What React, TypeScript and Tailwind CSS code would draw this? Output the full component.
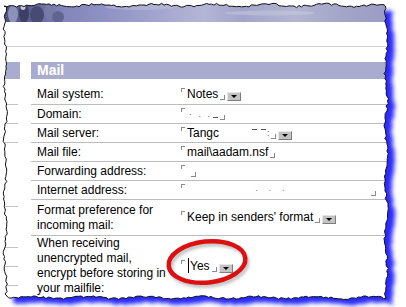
import React from "react";

// deterministic jitter for the torn paper edge
function makeRng(seed: number) {
  let s = seed;
  return () => {
    s = (s * 9301 + 49297) % 233280;
    return s / 233280;
  };
}

const rnd = makeRng(11);
const jag = (i: number) => 1.2 + 1.2 * Math.sin(i / 9) + rnd() * 2.2;
const pts: [number, number][] = [];
for (let x = 4; x < 386; x += 2.5) pts.push([x, 3 + jag(x)]);
for (let y = 6; y < 294; y += 2.5) pts.push([388.5 - jag(y), y]);
for (let x = 386; x > 6; x -= 2.5) pts.push([x, 299.5 - jag(x + 40) * 0.85]);
for (let y = 294; y > 6; y -= 2.5) pts.push([3 + jag(y + 70), y]);

const svgPoints = pts.map(([x, y]) => `${x.toFixed(1)},${y.toFixed(1)}`).join(" ");
const clip = `polygon(${pts.map(([x, y]) => `${x.toFixed(1)}px ${y.toFixed(1)}px`).join(", ")})`;

const Open = () => (
  <span className="self-start mt-[1px] w-[4px] h-[4px] border-t border-l border-[#8a8a8a] shrink-0" />
);

const Close = ({ className = "" }: { className?: string }) => (
  <span className={`self-end mb-[2px] w-[5px] h-[5px] border-b border-r border-[#8a8a8a] shrink-0 ${className}`} />
);

const Drop = () => (
  <span className="self-end mb-[1px] ml-[2px] w-[14px] h-[9px] bg-[#c3c3c3] border-t border-l border-[#e6e6e6] border-b border-r border-b-[#7d7d7d] border-r-[#7d7d7d] flex items-center justify-center shrink-0">
    <span className="w-0 h-0 border-l-[3px] border-r-[3px] border-t-[3px] border-l-transparent border-r-transparent border-t-black" />
  </span>
);

const Row = ({ h, label, children }: { h: string; label: React.ReactNode; children: React.ReactNode }) => (
  <div className={`flex items-center border-b border-[#bcbcbc] ${h}`}>
    <div className="w-[145px] pl-[6px] leading-[15px] shrink-0">{label}</div>
    <div className="flex items-stretch h-[15px] pl-[5px]">{children}</div>
  </div>
);

export default function App() {
  return (
    <div className="relative w-[406px] h-[307px] bg-white overflow-hidden font-['Liberation_Sans',Arial,sans-serif] text-[12px] text-black">
      <svg className="absolute inset-0" width="406" height="307">
        <defs>
          <filter id="sh" x="-10%" y="-10%" width="120%" height="120%">
            <feGaussianBlur stdDeviation="2.2" />
          </filter>
        </defs>
        <polygon points={svgPoints} transform="translate(7 6)" fill="#2a2aff" filter="url(#sh)" />
      </svg>

      <div className="relative w-[406px] h-[307px] bg-white" style={{ clipPath: clip }}>
        {/* banner */}
        <div className="relative h-[22px] w-[392px] bg-[linear-gradient(90deg,#4d5078_0%,#5f6290_8%,#8185ba_16%,#9093c4_28%,#a3a5cf_40%,#b4b6d6_52%,#a2a4ca_62%,#b3b5d3_75%,#a0a2c6_90%,#9a9cc4_100%)]">
          <svg className="absolute inset-0" width="392" height="22">
            <ellipse cx="13" cy="14" rx="5" ry="9" fill="#8d90b8" />
            <ellipse cx="24" cy="13" rx="5" ry="10" fill="#3d4063" />
            <ellipse cx="23" cy="7" rx="2.5" ry="3" fill="#c9cadf" />
            <ellipse cx="37" cy="15" rx="7" ry="9" fill="#474a72" />
            <ellipse cx="49" cy="12" rx="5" ry="8" fill="#777aa6" />
            <ellipse cx="58" cy="17" rx="6" ry="6" fill="#606490" />
            <ellipse cx="140" cy="7" rx="35" ry="3" fill="#c0c1dc" opacity="0.5" />
            <ellipse cx="270" cy="13" rx="45" ry="2.5" fill="#cacbe0" opacity="0.5" />
          </svg>
        </div>
        <div className="h-[25px] border-b border-[#d2d2d2]" />
        <div className="h-[15px]" />

        <div className="flex">
          {/* left column */}
          <div className="w-[20px] shrink-0">
            <div className="h-[17px] bg-[#aaaccf]" />
            <div className="h-[26px] ml-[5px] w-[13px] border-b border-[#c4c4c4]" />
            <div className="h-[19px] ml-[5px] w-[13px] border-b border-[#c4c4c4]" />
            <div className="h-[19px] ml-[5px] w-[13px] border-b border-[#c4c4c4]" />
            <div className="h-[64px] ml-[5px] w-[13px] border-b border-[#c4c4c4]" />
            <div className="h-[41px] ml-[5px] w-[13px] border-b border-[#c4c4c4]" />
            <div className="h-[19px] ml-[5px] w-[13px] border-b border-[#c4c4c4]" />
            <div className="h-[19px] ml-[5px] w-[13px] border-b border-[#c4c4c4]" />
          </div>
          <div className="w-[11px] shrink-0" />

          {/* main table */}
          <div className="flex-1">
            <div className="h-[17px] bg-[#aaaccf] pl-[6px] text-white font-bold text-[14px] leading-[17px]">Mail</div>
            <div className="h-[6px]" />

            <Row h="h-[20px]" label="Mail system:">
              <Open />
              <span className="ml-[2px] leading-[15px]">Notes</span>
              <Close className="ml-[2px]" />
              <Drop />
            </Row>

            <Row h="h-[19px]" label="Domain:">
              <Open />
              <span className="ml-[4px] text-[9px] leading-[15px] text-[#666] tracking-[2px]">· . .</span>
              <span className="self-end mb-[4px] ml-[1px] w-[5px] border-b border-[#555]" />
              <Close className="ml-[2px]" />
            </Row>

            <Row h="h-[19px]" label="Mail server:">
              <Open />
              <span className="ml-[2px] leading-[15px]">Tangc</span>
              <span className="ml-[33px] self-start mt-[3px] w-[5px] border-t border-[#555]" />
              <span className="ml-[4px] self-start mt-[3px] w-[5px] border-t border-[#555]" />
              <span className="ml-[1px] text-[9px] leading-[15px] text-[#666]">:</span>
              <Close className="ml-[1px]" />
              <Drop />
            </Row>

            <Row h="h-[19px]" label="Mail file:">
              <Open />
              <span className="ml-[2px] leading-[15px]">mail\aadam.nsf</span>
              <Close className="ml-[2px]" />
            </Row>

            <Row h="h-[19px]" label="Forwarding address:">
              <Open />
              <Close className="ml-[6px] mb-[0px]" />
            </Row>

            <Row h="h-[19px]" label="Internet address:">
              <Open />
              <span className="ml-[70px] text-[9px] leading-[15px] text-[#777] tracking-[4px]">· ·  ·</span>
              <Close className="ml-[82px] mb-[0px]" />
            </Row>

            <Row h="h-[36px]" label={<>Format preference for<br />incoming mail:</>}>
              <Open />
              <span className="ml-[2px] leading-[15px]">Keep in senders' format</span>
              <Close className="ml-[2px]" />
              <Drop />
            </Row>

            <div className="flex items-center h-[60px]">
              <div className="w-[145px] pl-[6px] leading-[15px] shrink-0">
                When receiving<br />unencrypted mail,<br />encrypt before storing in<br />your mailfile:
              </div>
              <div className="flex items-stretch h-[15px] pl-[5px]">
                <Open />
                <span className="ml-[3px] w-[1px] -mt-[1px] h-[15px] bg-black" />
                <span className="ml-[1px] leading-[15px]">Yes</span>
                <Close className="ml-[2px]" />
                <Drop />
              </div>
            </div>
          </div>
        </div>
      </div>

      <svg className="absolute inset-0 pointer-events-none" width="406" height="307">
        <defs>
          <filter id="es" x="-20%" y="-20%" width="140%" height="140%">
            <feGaussianBlur stdDeviation="1.6" />
          </filter>
        </defs>
        <polygon points={svgPoints} fill="none" stroke="#111" strokeWidth="1" />
        <ellipse cx="209" cy="265" rx="38.5" ry="20.5" transform="rotate(-6 209 265)" fill="none" stroke="#8a8a8a" strokeWidth="4" opacity="0.55" filter="url(#es)" />
        <ellipse cx="207" cy="262" rx="38.5" ry="20.5" transform="rotate(-6 207 262)" fill="none" stroke="#dc1010" strokeWidth="4.5" />
      </svg>
    </div>
  );
}
